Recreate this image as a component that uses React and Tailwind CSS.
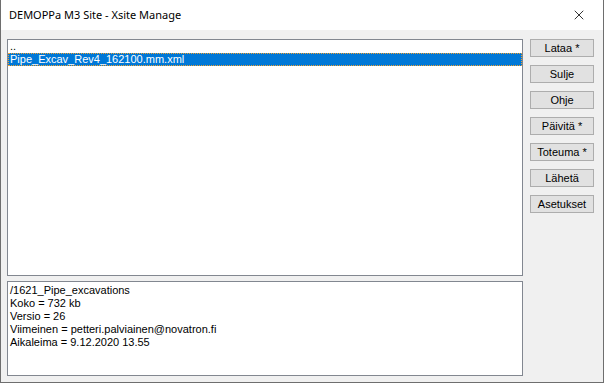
import { X } from 'lucide-react'

const buttons = ['Lataa *', 'Sulje', 'Ohje', 'Päivitä *', 'Toteuma *', 'Lähetä', 'Asetukset']

const info = [
  '/1621_Pipe_excavations',
  'Koko = 732 kb',
  'Versio = 26',
  'Viimeinen = petteri.palviainen@novatron.fi',
  'Aikaleima = 9.12.2020 13.55',
]

export default function App() {
  return (
    <div className="w-[604px] h-[383px] flex flex-col bg-white border-x border-b border-[#6e6e6e] font-['Liberation_Sans',sans-serif] text-[11px] text-black">
      <div className="h-[30px] flex items-center justify-between pl-[8px] pr-[16px] bg-white">
        <span className="font-['Noto_Sans',sans-serif] text-[11px]">DEMOPPa M3 Site - Xsite Manage</span>
        <X className="w-[16px] h-[16px] text-black" strokeWidth={1.2} />
      </div>
      <div className="flex-1 flex bg-[#f0f0f0] pl-[6px] pr-[9px] pt-[9px] pb-[6px] gap-[7px]">
        <div className="w-[516px] flex flex-col gap-[5px]">
          <div className="h-[237px] bg-white border border-[#828790] leading-[13px]">
            <div className="pl-[2px]">..</div>
            <div className="bg-[#0078d7] text-white pl-[2px] outline outline-1 outline-dotted outline-[#f0a030] -outline-offset-1">
              Pipe_Excav_Rev4_162100.mm.xml
            </div>
          </div>
          <div className="flex-1 bg-white border border-[#828790] pl-[2px] pt-[2px] leading-[13px]">
            {info.map((line) => (
              <div key={line}>{line}</div>
            ))}
          </div>
        </div>
        <div className="w-[64px] flex flex-col gap-[8px]">
          {buttons.map((b) => (
            <button
              key={b}
              className="h-[18px] bg-[#e1e1e1] border border-[#adadad] text-[11px] leading-none flex items-center justify-center"
            >
              {b}
            </button>
          ))}
        </div>
      </div>
    </div>
  )
}
